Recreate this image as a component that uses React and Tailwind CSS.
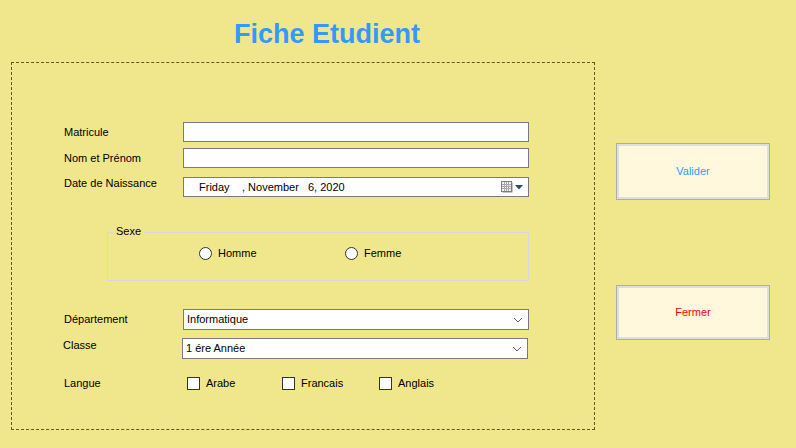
import React from 'react';

const font = { fontFamily: '"Microsoft Sans Serif", "Liberation Sans", Arial, sans-serif' };

function Chevron() {
  return (
    <svg width="10" height="6" viewBox="0 0 10 6" className="text-[#606060]">
      <polyline points="1,1 5,5 9,1" fill="none" stroke="currentColor" strokeWidth="1" />
    </svg>
  );
}

function CalendarIcon() {
  return (
    <div className="flex items-center gap-[2px]">
      <svg width="12" height="12" viewBox="0 0 12 12">
        <rect x="1.5" y="1.5" width="10" height="10" fill="#8a8a8a" />
        <rect x="0.5" y="0.5" width="10" height="10" fill="#f4f4f4" stroke="#7d7d7d" />
        <path d="M3.5 1v9M5.5 1v9M7.5 1v9M1 3.5h9M1 5.5h9M1 7.5h9" stroke="#a8a8a8" strokeWidth="1" />
      </svg>
      <svg width="8" height="5" viewBox="0 0 8 5">
        <polygon points="0,0 8,0 4,4.5" fill="#2f4a78" />
      </svg>
    </div>
  );
}

function Field({ label, children, labelClass = '' }) {
  return (
    <div className="flex items-center">
      <div className={`w-[171px] shrink-0 whitespace-nowrap pl-[52px] text-[11px] ${labelClass}`}>{label}</div>
      {children}
    </div>
  );
}

function Combo({ value }) {
  return (
    <div className="w-[346px] h-[21px] bg-white border border-[#7a7a7a] flex items-center justify-between pl-[3px] pr-[5px] text-[11px]">
      <span>{value}</span>
      <Chevron />
    </div>
  );
}

function Radio({ label, className = '' }) {
  return (
    <div className={`flex items-center ${className}`}>
      <div className="w-[13px] h-[13px] rounded-full bg-white border border-[#333333]" />
      <span className="ml-[6px] text-[11px]">{label}</span>
    </div>
  );
}

function Check({ label, className = '' }) {
  return (
    <div className={`flex items-center ${className}`}>
      <div className="w-[13px] h-[13px] bg-white border border-[#333333]" />
      <span className="ml-[6px] text-[11px]">{label}</span>
    </div>
  );
}

export default function App() {
  return (
    <div className="w-[796px] h-[448px] bg-[#F0E68C] text-black overflow-hidden" style={font}>
      {/* Title */}
      <div className="h-[62px] pt-[21px] pl-[234px]">
        <h1 className="text-[27px] leading-[27px] font-bold text-[#3399FF]">Fiche Etudient</h1>
      </div>

      <div className="flex">
        {/* Main panel */}
        <div className="ml-[11px] w-[584px] h-[368px] shrink-0 border border-dashed border-[#665714] pt-[59px]">
          <Field label="Matricule">
            <div className="w-[346px] h-[20px] bg-white border border-[#7a7a7a]" />
          </Field>
          <div className="mt-[6px]">
            <Field label="Nom et Prénom">
              <div className="w-[346px] h-[20px] bg-white border border-[#7a7a7a]" />
            </Field>
          </div>
          <div className="mt-[9px]">
            <Field label="Date de Naissance" labelClass="-mt-[7px]">
              <div className="w-[346px] h-[20px] bg-white border border-[#7a7a7a] flex items-center text-[11px] pr-[5px]">
                <span className="ml-[15px] w-[43px]">Friday</span>
                <span className="w-[66px]">, November</span>
                <span>6, 2020</span>
                <span className="ml-auto"><CalendarIcon /></span>
              </div>
            </Field>
          </div>

          {/* Sexe group */}
          <div className="mt-[35px] ml-[95px] w-[422px] h-[49px] border border-[#d8d8d8] relative">
            <span className="absolute -top-[8px] left-[6px] px-[2px] bg-[#F0E68C] text-[11px] leading-[13px]">Sexe</span>
            <div className="flex pt-[12px]">
              <Radio label="Homme" className="ml-[91px] w-[146px]" />
              <Radio label="Femme" />
            </div>
          </div>

          <div className="mt-[28px]">
            <Field label="Département">
              <Combo value="Informatique" />
            </Field>
          </div>
          <div className="mt-[8px]">
            <Field label="Classe" labelClass="-mt-[7px] -ml-[1px]">
              <Combo value="1 ére Année" />
            </Field>
          </div>
          <div className="mt-[16px]">
            <Field label="Langue">
              <div className="flex">
                <Check label="Arabe" className="ml-[4px] w-[95px]" />
                <Check label="Francais" className="w-[97px]" />
                <Check label="Anglais" />
              </div>
            </Field>
          </div>
        </div>

        {/* Buttons */}
        <div className="ml-[21px] flex flex-col">
          <button className="mt-[81px] w-[154px] h-[57px] bg-[#FFF8DC] border border-[#adadad] shadow-[inset_0_0_0_2px_#dedede] text-[11px] text-[#3399FF]">
            Valider
          </button>
          <button className="mt-[85px] w-[154px] h-[55px] bg-[#FFF8DC] border border-[#adadad] shadow-[inset_0_0_0_2px_#dedede] text-[11px] text-[#FF0000]">
            Fermer
          </button>
        </div>
      </div>
    </div>
  );
}
